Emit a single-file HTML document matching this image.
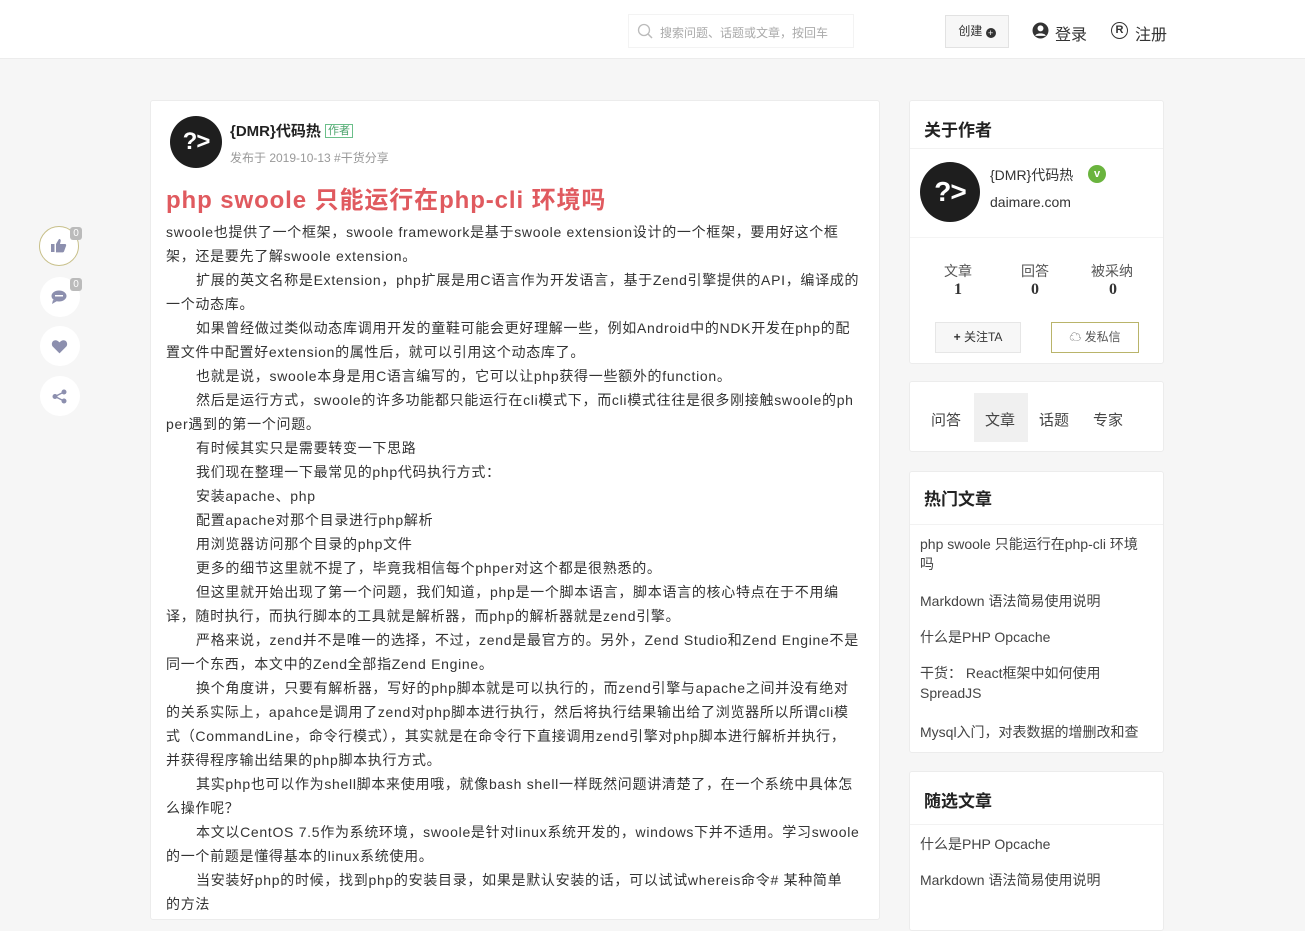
<!DOCTYPE html>
<html><head><meta charset="utf-8"><style>
*{box-sizing:border-box;margin:0;padding:0}
body{width:1305px;height:900px;overflow:hidden;background:#f6f6f6;font-family:"Liberation Sans","Noto Sans CJK SC",sans-serif;color:#333;position:relative}
.hdr{position:absolute;left:0;top:0;width:1305px;height:59px;background:#fff;border-bottom:1px solid #ececec}
.abs{position:absolute}
.card{position:absolute;background:#fff;border:1px solid #ececec;border-radius:3px}
.ln{position:absolute;left:15px;font-size:14px;white-space:nowrap;color:#333;line-height:24px;letter-spacing:0.7px}
.in{left:45px}
</style></head><body>
<div class="hdr">
  <div class="abs" style="left:628px;top:14px;width:226px;height:34px;background:#fff;border:1px solid #f3f3f3"></div>
  <svg class="abs" style="left:637px;top:23px" width="16" height="16" viewBox="0 0 16 16"><circle cx="7" cy="7" r="5.5" fill="none" stroke="#bbb" stroke-width="1.3"/><path d="M11 11l4 4" stroke="#bbb" stroke-width="1.5"/></svg>
  <div class="abs" style="left:660px;top:24px;font-size:12px;color:#aaa">搜索问题、话题或文章，按回车</div>
  <div class="abs" style="left:945px;top:15px;width:64px;height:33px;border:1px solid #e2e2e2;background:#f7f7f7;font-size:12px;color:#333;line-height:31px;text-align:center">创建 <span style="display:inline-block;width:10px;height:10px;border-radius:50%;background:#333;color:#fff;font-size:9px;line-height:10px;vertical-align:-1px">+</span></div>
  <svg class="abs" style="left:1032px;top:22px" width="17" height="17" viewBox="0 0 16 16"><circle cx="8" cy="8" r="7.5" fill="#333"/><circle cx="8" cy="6" r="2.8" fill="#fff"/><path d="M3 13c1-3 9-3 10 0" fill="#fff"/></svg>
  <div class="abs" style="left:1055px;top:21px;font-size:16px;color:#333">登录</div>
  <div class="abs" style="left:1111px;top:22px;width:17px;height:17px;border:1.5px solid #333;border-radius:50%;font-size:11px;font-weight:bold;text-align:center;line-height:14px;color:#333">R</div>
  <div class="abs" style="left:1135px;top:21px;font-size:16px;color:#333">注册</div>
</div>

<div class="abs" style="left:39px;top:226px;width:40px;height:40px;border-radius:50%;border:1px solid #c8c08a;background:#fff"></div>
<svg class="abs" style="left:51px;top:238px" width="16" height="15" viewBox="0 0 16 15"><rect x="0" y="6" width="3.5" height="8" fill="#8c8fae"/><path d="M5 6l3-5c1.5 0 2 1 1.6 2.5L9 6h5c1 0 1.5 1 1 2l-2 5.5c-.3.6-.8.9-1.5.9H5z" fill="#8c8fae"/></svg>
<div class="abs" style="left:70px;top:227px;width:12px;height:13px;background:#bbb;border-radius:3px;color:#fff;font-size:10px;text-align:center;line-height:13px">0</div>
<div class="abs" style="left:40px;top:277px;width:40px;height:40px;border-radius:50%;background:#fff"></div>
<svg class="abs" style="left:51px;top:290px" width="16" height="14" viewBox="0 0 16 14"><ellipse cx="8" cy="6" rx="7.5" ry="5.5" fill="#8c8fae"/><path d="M2 10l-1 4 5-3z" fill="#8c8fae"/><rect x="4" y="5" width="8" height="1.5" fill="#fff"/></svg>
<div class="abs" style="left:70px;top:278px;width:12px;height:13px;background:#bbb;border-radius:3px;color:#fff;font-size:10px;text-align:center;line-height:13px">0</div>
<div class="abs" style="left:40px;top:326px;width:40px;height:40px;border-radius:50%;background:#fff"></div>
<svg class="abs" style="left:51px;top:339px" width="17" height="15" viewBox="0 0 24 22"><path d="M12 21L2 11C-1 7 2 1 7 2c2 0 4 2 5 3 1-1 3-3 5-3 5-1 8 5 5 9z" fill="#8c8fae"/></svg>
<div class="abs" style="left:40px;top:376px;width:40px;height:40px;border-radius:50%;background:#fff"></div>
<svg class="abs" style="left:52px;top:389px" width="15" height="15" viewBox="0 0 15 15"><circle cx="3" cy="7.5" r="2.5" fill="#8c8fae"/><circle cx="12" cy="3" r="2.5" fill="#8c8fae"/><circle cx="12" cy="12" r="2.5" fill="#8c8fae"/><path d="M3 7.5L12 3M3 7.5L12 12" stroke="#8c8fae" stroke-width="1.5"/></svg>

<div class="card" style="left:150px;top:100px;width:730px;height:820px">
  <div class="abs" style="left:19px;top:15px;width:52px;height:52px;border-radius:50%;background:#1e1e1e;color:#fff;font-weight:bold;font-size:24px;line-height:52px;text-align:center;letter-spacing:-1px">?&gt;</div>
  <div class="abs" style="left:79px;top:19px;font-size:15px;font-weight:bold;color:#222">{DMR}代码热 <span style="font-size:11px;font-weight:normal;color:#4aa36b;border:1px solid #6bbf8a;padding:0 2px;vertical-align:2px">作者</span></div>
  <div class="abs" style="left:79px;top:48px;font-size:12px;color:#999">发布于 2019-10-13 #干货分享</div>
  <div class="abs" style="left:15px;top:79px;font-size:24px;font-weight:bold;color:#e05a5f;white-space:nowrap;letter-spacing:0.9px">php swoole 只能运行在php-cli 环境吗</div>
  <div class="ln" style="top:119px">swoole也提供了一个框架，swoole framework是基于swoole extension设计的一个框架，要用好这个框</div>
  <div class="ln" style="top:143px">架，还是要先了解swoole extension。</div>
  <div class="ln in" style="top:167px">扩展的英文名称是Extension，php扩展是用C语言作为开发语言，基于Zend引擎提供的API，编译成的</div>
  <div class="ln" style="top:191px">一个动态库。</div>
  <div class="ln in" style="top:215px">如果曾经做过类似动态库调用开发的童鞋可能会更好理解一些，例如Android中的NDK开发在php的配</div>
  <div class="ln" style="top:239px">置文件中配置好extension的属性后，就可以引用这个动态库了。</div>
  <div class="ln in" style="top:263px">也就是说，swoole本身是用C语言编写的，它可以让php获得一些额外的function。</div>
  <div class="ln in" style="top:287px">然后是运行方式，swoole的许多功能都只能运行在cli模式下，而cli模式往往是很多刚接触swoole的ph</div>
  <div class="ln" style="top:311px">per遇到的第一个问题。</div>
  <div class="ln in" style="top:335px">有时候其实只是需要转变一下思路</div>
  <div class="ln in" style="top:359px">我们现在整理一下最常见的php代码执行方式：</div>
  <div class="ln in" style="top:383px">安装apache、php</div>
  <div class="ln in" style="top:407px">配置apache对那个目录进行php解析</div>
  <div class="ln in" style="top:431px">用浏览器访问那个目录的php文件</div>
  <div class="ln in" style="top:455px">更多的细节这里就不提了，毕竟我相信每个phper对这个都是很熟悉的。</div>
  <div class="ln in" style="top:479px">但这里就开始出现了第一个问题，我们知道，php是一个脚本语言，脚本语言的核心特点在于不用编</div>
  <div class="ln" style="top:503px">译，随时执行，而执行脚本的工具就是解析器，而php的解析器就是zend引擎。</div>
  <div class="ln in" style="top:527px">严格来说，zend并不是唯一的选择，不过，zend是最官方的。另外，Zend Studio和Zend Engine不是</div>
  <div class="ln" style="top:551px">同一个东西，本文中的Zend全部指Zend Engine。</div>
  <div class="ln in" style="top:575px">换个角度讲，只要有解析器，写好的php脚本就是可以执行的，而zend引擎与apache之间并没有绝对</div>
  <div class="ln" style="top:599px">的关系实际上，apahce是调用了zend对php脚本进行执行，然后将执行结果输出给了浏览器所以所谓cli模</div>
  <div class="ln" style="top:623px">式（CommandLine，命令行模式），其实就是在命令行下直接调用zend引擎对php脚本进行解析并执行，</div>
  <div class="ln" style="top:647px">并获得程序输出结果的php脚本执行方式。</div>
  <div class="ln in" style="top:671px">其实php也可以作为shell脚本来使用哦，就像bash shell一样既然问题讲清楚了，在一个系统中具体怎</div>
  <div class="ln" style="top:695px">么操作呢？</div>
  <div class="ln in" style="top:719px">本文以CentOS 7.5作为系统环境，swoole是针对linux系统开发的，windows下并不适用。学习swoole</div>
  <div class="ln" style="top:743px">的一个前题是懂得基本的linux系统使用。</div>
  <div class="ln in" style="top:767px">当安装好php的时候，找到php的安装目录，如果是默认安装的话，可以试试whereis命令# 某种简单</div>
  <div class="ln" style="top:791px">的方法</div>
</div>

<div class="card" style="left:909px;top:100px;width:255px;height:264px">
  <div class="abs" style="left:14px;top:15px;font-size:17px;font-weight:bold;color:#222">关于作者</div>
  <div class="abs" style="left:0;top:47px;width:253px;height:1px;background:#f2f2f2"></div>
  <div class="abs" style="left:10px;top:61px;width:60px;height:60px;border-radius:50%;background:#1e1e1e;color:#fff;font-weight:bold;font-size:28px;line-height:60px;text-align:center;letter-spacing:-1px">?&gt;</div>
  <div class="abs" style="left:80px;top:64px;font-size:14px;color:#333">{DMR}代码热</div>
  <div class="abs" style="left:178px;top:64px;width:18px;height:18px;border-radius:50%;background:#6ab43e;color:#fff;font-size:11px;font-weight:bold;text-align:center;line-height:18px">v</div>
  <div class="abs" style="left:80px;top:93px;font-size:14px;color:#333">daimare.com</div>
  <div class="abs" style="left:0;top:136px;width:253px;height:1px;background:#f4f4f4"></div>
  <div class="abs" style="left:34px;top:160px;font-size:14px;color:#555">文章</div>
  <div class="abs" style="left:44px;top:180px;font-size:16px;font-weight:bold;color:#333;font-family:'Liberation Serif',serif">1</div>
  <div class="abs" style="left:111px;top:160px;font-size:14px;color:#555">回答</div>
  <div class="abs" style="left:121px;top:180px;font-size:16px;font-weight:bold;color:#333;font-family:'Liberation Serif',serif">0</div>
  <div class="abs" style="left:181px;top:160px;font-size:14px;color:#555">被采纳</div>
  <div class="abs" style="left:199px;top:180px;font-size:16px;font-weight:bold;color:#333;font-family:'Liberation Serif',serif">0</div>
  <div class="abs" style="left:25px;top:221px;width:86px;height:31px;border:1px solid #e6e6e6;background:#f7f7f7;font-size:12px;text-align:center;line-height:29px;color:#333"><b>+</b> 关注TA</div>
  <div class="abs" style="left:141px;top:221px;width:88px;height:31px;border:1px solid #b9b46a;background:#fff;font-size:12px;text-align:center;line-height:29px;color:#555">☁ 发私信</div>
</div>
<div class="card" style="left:909px;top:381px;width:255px;height:71px">
  <div class="abs" style="left:64px;top:11px;width:54px;height:49px;background:#f0f0f0"></div>
  <div class="abs" style="left:21px;top:27px;font-size:15px;color:#444">问答</div>
  <div class="abs" style="left:75px;top:27px;font-size:15px;color:#444">文章</div>
  <div class="abs" style="left:129px;top:27px;font-size:15px;color:#444">话题</div>
  <div class="abs" style="left:183px;top:27px;font-size:15px;color:#444">专家</div>
</div>
<div class="card" style="left:909px;top:471px;width:255px;height:282px">
  <div class="abs" style="left:14px;top:13px;font-size:17px;font-weight:bold;color:#222">热门文章</div>
  <div class="abs" style="left:0;top:52px;width:253px;height:1px;background:#f2f2f2"></div>
  <div class="abs" style="left:10px;top:62px;width:225px;font-size:14px;line-height:20px;color:#444">php swoole 只能运行在php-cli 环境吗</div>
  <div class="abs" style="left:10px;top:119px;font-size:14px;color:#444">Markdown 语法简易使用说明</div>
  <div class="abs" style="left:10px;top:155px;font-size:14px;color:#444">什么是PHP Opcache</div>
  <div class="abs" style="left:10px;top:191px;width:230px;font-size:14px;line-height:20px;color:#444">干货： React框架中如何使用SpreadJS</div>
  <div class="abs" style="left:10px;top:250px;font-size:14px;color:#444">Mysql入门，对表数据的增删改和查</div>
</div>
<div class="card" style="left:909px;top:771px;width:255px;height:160px">
  <div class="abs" style="left:14px;top:15px;font-size:17px;font-weight:bold;color:#222">随选文章</div>
  <div class="abs" style="left:0;top:52px;width:253px;height:1px;background:#f2f2f2"></div>
  <div class="abs" style="left:10px;top:62px;font-size:14px;color:#444">什么是PHP Opcache</div>
  <div class="abs" style="left:10px;top:98px;font-size:14px;color:#444">Markdown 语法简易使用说明</div>
</div>
</body></html>
